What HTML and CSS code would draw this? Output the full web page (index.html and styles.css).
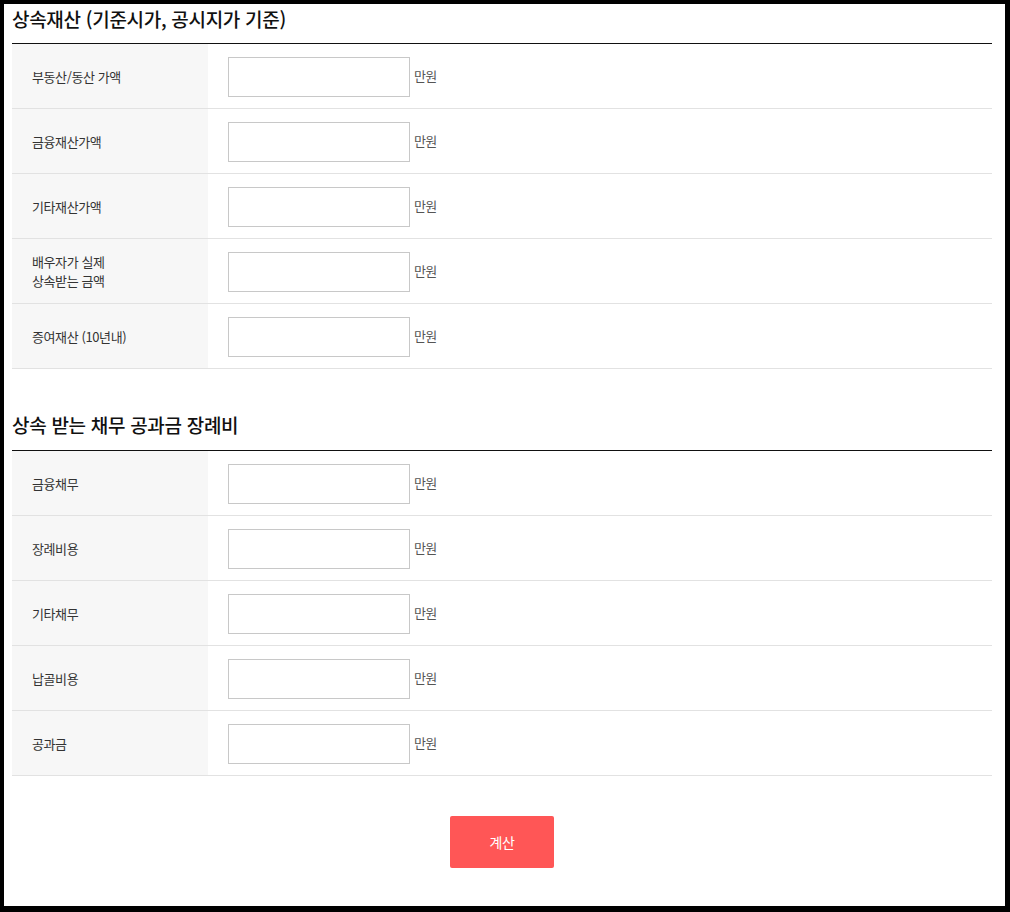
FILE: index.html
```html
<!DOCTYPE html>
<html lang="ko">
<head>
<meta charset="utf-8">
<title>상속세 계산</title>
<link rel="stylesheet" href="styles.css">
</head>
<body>
<div class="frame">
  <section class="section">
    <h2 class="section-title">상속재산 (기준시가, 공시지가 기준)</h2>
    <div class="rows">
      <div class="row"><div class="label">부동산/동산 가액</div><div class="field"><input class="input" type="text"><span class="unit">만원</span></div></div>
      <div class="row"><div class="label">금융재산가액</div><div class="field"><input class="input" type="text"><span class="unit">만원</span></div></div>
      <div class="row"><div class="label">기타재산가액</div><div class="field"><input class="input" type="text"><span class="unit">만원</span></div></div>
      <div class="row"><div class="label">배우자가 실제<br>상속받는 금액</div><div class="field"><input class="input" type="text"><span class="unit">만원</span></div></div>
      <div class="row"><div class="label">증여재산 (10년내)</div><div class="field"><input class="input" type="text"><span class="unit">만원</span></div></div>
    </div>
  </section>
  <section class="section section-second">
    <h2 class="section-title">상속 받는 채무 공과금 장례비</h2>
    <div class="rows">
      <div class="row"><div class="label">금융채무</div><div class="field"><input class="input" type="text"><span class="unit">만원</span></div></div>
      <div class="row"><div class="label">장례비용</div><div class="field"><input class="input" type="text"><span class="unit">만원</span></div></div>
      <div class="row"><div class="label">기타채무</div><div class="field"><input class="input" type="text"><span class="unit">만원</span></div></div>
      <div class="row"><div class="label">납골비용</div><div class="field"><input class="input" type="text"><span class="unit">만원</span></div></div>
      <div class="row"><div class="label">공과금</div><div class="field"><input class="input" type="text"><span class="unit">만원</span></div></div>
    </div>
  </section>
  <div class="actions">
    <button class="btn" type="button">계산</button>
  </div>
</div>
</body>
</html>
```

FILE: styles.css
```css
html, body {
  margin: 0;
  padding: 0;
  background: #000;
}
body {
  padding: 4px 5px 6px 4px;
  font-family: "Noto Sans CJK KR", "Noto Sans", sans-serif;
  color: #333;
}
.frame {
  background: #fff;
  height: 902px;
  box-sizing: border-box;
  padding: 0 13px 0 8px;
}
.section-title {
  margin: 0;
  font-size: 19px;
  font-weight: 500;
  letter-spacing: -0.3px;
  line-height: 30px;
  padding: 0 0 9px;
  color: #111;
  border-bottom: 1px solid #111;
}
.section-second {
  margin-top: 41px;
}
.section-second .section-title {
  padding-bottom: 10px;
}
.row {
  display: flex;
  border-bottom: 1px solid #e2e2e2;
  height: 64px;
}
.label {
  width: 196px;
  background: #f7f7f7;
  box-sizing: border-box;
  padding-left: 20px;
  display: flex;
  align-items: center;
  font-size: 13px;
  letter-spacing: -0.4px;
  line-height: 19px;
  color: #333;
}
.field {
  display: flex;
  align-items: center;
  padding: 1px 0 0 20px;
  gap: 4px;
}
.input {
  width: 182px;
  height: 40px;
  box-sizing: border-box;
  border: 1px solid #c8c8c8;
  margin: 0;
  padding: 0 8px;
  background: #fff;
  font-family: inherit;
  font-size: 13px;
}
.unit {
  font-size: 13px;
  letter-spacing: -0.6px;
  color: #555;
  margin-top: -3px;
}
.actions {
  display: flex;
  justify-content: center;
  margin-top: 40px;
}
.btn {
  width: 104px;
  height: 52px;
  border: 0;
  border-radius: 2px;
  background: #ff5656;
  color: #fff;
  font-family: inherit;
  font-size: 14px;
  letter-spacing: -0.5px;
  cursor: pointer;
}
```
